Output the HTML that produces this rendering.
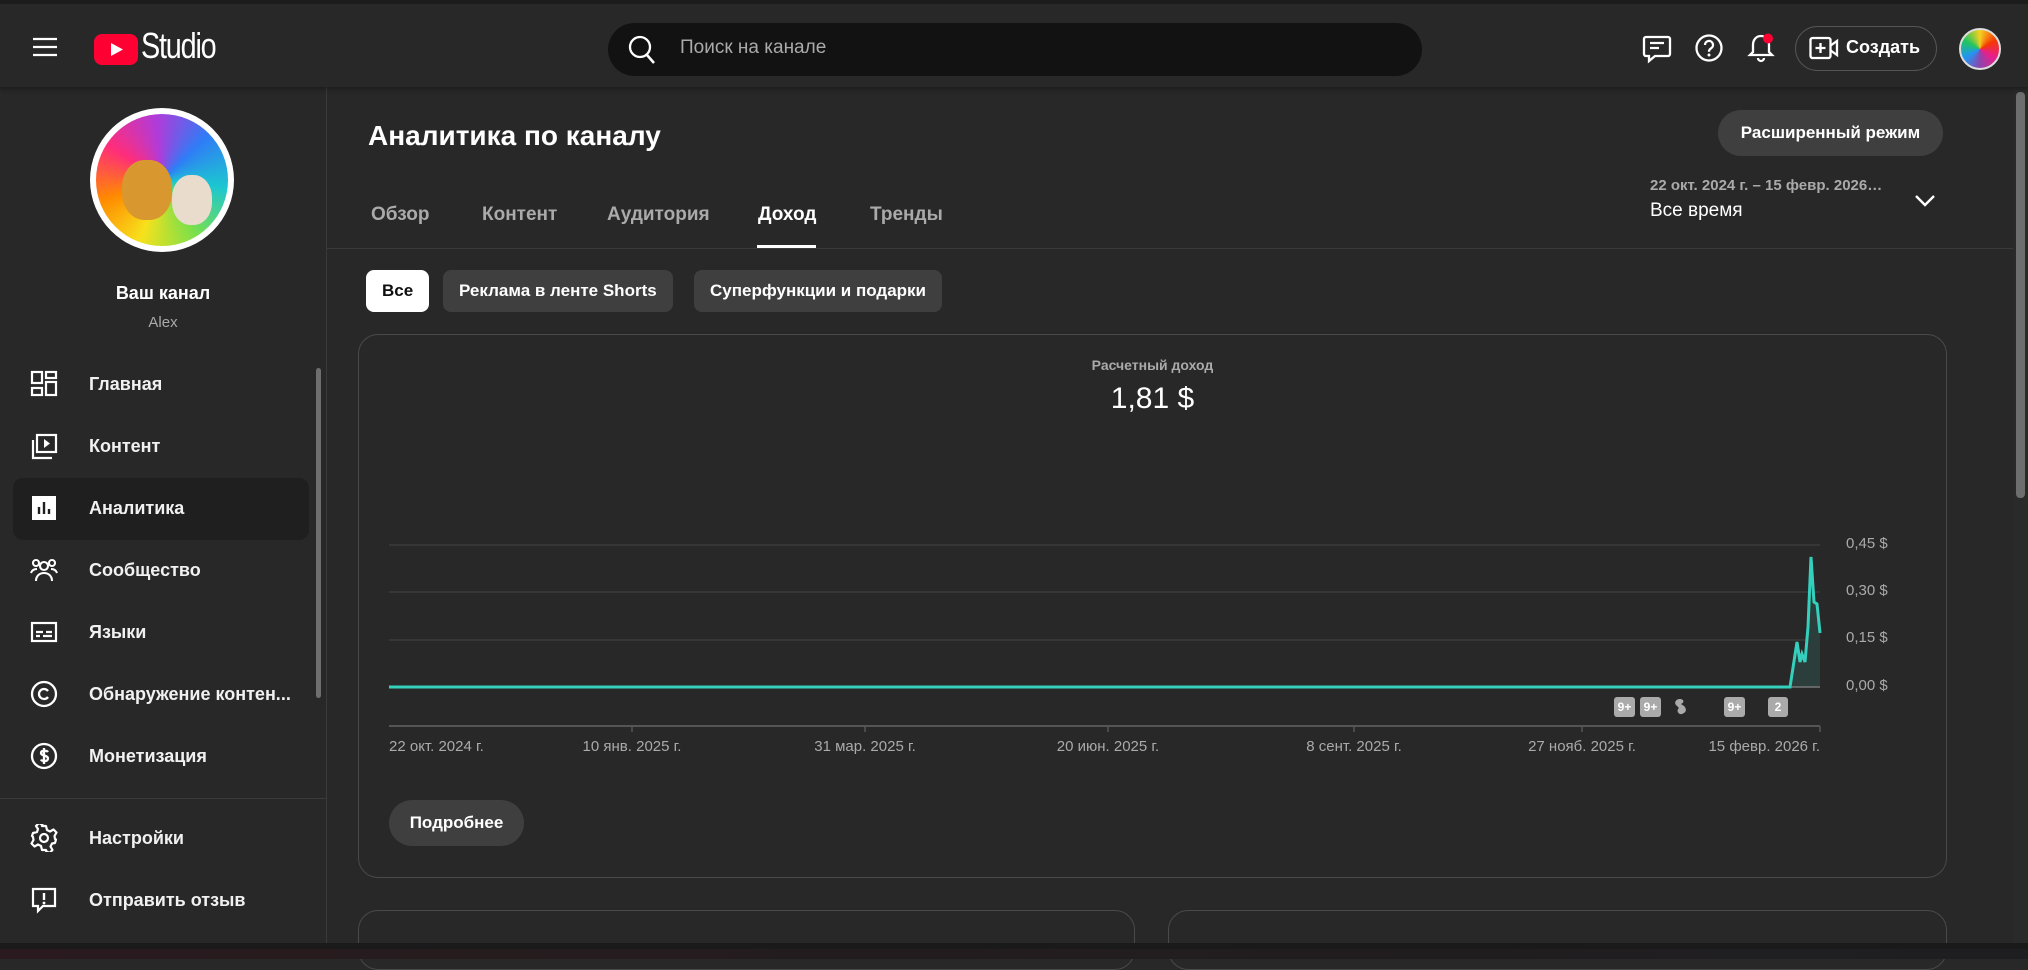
<!DOCTYPE html>
<html><head><meta charset="utf-8"><style>
*{box-sizing:border-box;margin:0;padding:0}
body{width:2028px;height:959px;overflow:hidden;background:#282828;font-family:"Liberation Sans","Noto Sans CJK SC",sans-serif;color:#fff;position:relative}
.a{position:absolute}
.top{left:0;top:0;width:2028px;height:87px;background:#282828;border-top:4px solid #1c1c1c;box-shadow:0 2px 5px rgba(0,0,0,.35);z-index:2}
.nav{left:30px;font-size:18px;font-weight:bold;color:#f1f1f1;width:270px;height:62px;display:flex;align-items:center;white-space:nowrap}
.nav svg{position:absolute;left:0;width:28px;height:28px}
.nav span{position:absolute;left:59px;white-space:nowrap}
.tab{top:204px;font-size:19px;color:#aaa;font-weight:bold}
.chip{top:270px;height:42px;border-radius:8px;background:#3f3f3f;font-size:17px;font-weight:bold;display:flex;align-items:center;padding:0 16px}
.xl{top:738px;font-size:15px;color:#aaa;white-space:nowrap}
.yl{left:1846px;font-size:15px;color:#aaa}
.bd{top:697px;height:20px;background:#aaa;border-radius:3px;color:#fff;font-size:12px;font-weight:bold;display:flex;align-items:center;justify-content:center}
</style></head><body>
<div class="a top">
  <svg class="a" style="left:32px;top:33px" width="26" height="20" viewBox="0 0 26 20"><path d="M1 2h24M1 10h24M1 18h24" stroke="#fff" stroke-width="2.2"/></svg>
  <svg class="a" style="left:94px;top:30px" width="44" height="31" viewBox="0 0 44 31"><rect width="44" height="31" rx="8" fill="#ff0033"/><path d="M17 9l12 6.5L17 22z" fill="#fff"/></svg>
  <div class="a" style="left:141px;top:21px;font-size:36px;letter-spacing:-1.5px;transform:scaleX(.8);transform-origin:left;font-weight:500">Studio</div>
  <div class="a" style="left:608px;top:19px;width:814px;height:53px;border-radius:27px;background:#121212"></div>
  <svg class="a" style="left:627px;top:30px" width="30" height="32" viewBox="0 0 30 32"><circle cx="13" cy="13" r="10" stroke="#fff" stroke-width="2.3" fill="none"/><path d="M20 21l7 8" stroke="#fff" stroke-width="2.5"/></svg>
  <div class="a" style="left:680px;top:33px;font-size:19px;color:#aaa">Поиск на канале</div>
  <svg class="a" style="left:1641px;top:29px" width="32" height="32" viewBox="0 0 32 32"><path d="M5 4h22a2 2 0 0 1 2 2v15a2 2 0 0 1-2 2H14l-6 5v-5H5a2 2 0 0 1-2-2V6a2 2 0 0 1 2-2z" fill="none" stroke="#fff" stroke-width="2.3"/><path d="M9 10h14M9 15h9" stroke="#fff" stroke-width="2.3"/></svg>
  <svg class="a" style="left:1694px;top:29px" width="30" height="30" viewBox="0 0 30 30"><circle cx="15" cy="15" r="12.5" fill="none" stroke="#fff" stroke-width="2.3"/><path d="M11 12a4 4 0 1 1 6 3.4c-1.5.9-2 1.6-2 3.3" fill="none" stroke="#fff" stroke-width="2.3"/><circle cx="15" cy="22" r="1.5" fill="#fff"/></svg>
  <svg class="a" style="left:1745px;top:27px" width="34" height="34" viewBox="0 0 34 34"><path d="M16 5c-5 0-8 4-8 9v7l-3 3h22l-3-3v-7c0-5-3-9-8-9zM13 27a3 3 0 0 0 6 0" fill="none" stroke="#fff" stroke-width="2.3"/><circle cx="23" cy="7.5" r="5" fill="#ff0033"/></svg>
  <div class="a" style="left:1795px;top:22px;width:142px;height:45px;border:1px solid #555;border-radius:23px"></div>
  <svg class="a" style="left:1809px;top:31px" width="30" height="26" viewBox="0 0 30 26"><rect x="1.5" y="3" width="20" height="20" rx="2" fill="none" stroke="#fff" stroke-width="2.3"/><path d="M21 11l7-5v14l-7-5M11.5 8v10M6.5 13h10" fill="none" stroke="#fff" stroke-width="2.3"/></svg>
  <div class="a" style="left:1846px;top:33px;font-size:18px;font-weight:bold">Создать</div>
  <div class="a" style="left:1959px;top:24px;width:42px;height:42px;border-radius:50%;border:2px solid #ddd;background:conic-gradient(#f5d020,#f53803,#e91e8c,#8e44ad,#2196f3,#22c55e,#f5d020)"></div>
</div>
<div class="a" style="left:326px;top:87px;width:1px;height:860px;background:#3a3a3a"></div>
<div class="a" style="left:90px;top:108px;width:144px;height:144px;border-radius:50%;background:#fff"></div>
<div class="a" style="left:96px;top:114px;width:132px;height:132px;border-radius:50%;background:conic-gradient(from 200deg,#f7e11b,#ff8a00,#ff2d7a,#b13bd9,#2f7cf6,#1cc7d0,#7be04a,#f7e11b)"></div>
<div class="a" style="left:122px;top:160px;width:50px;height:60px;border-radius:45%;background:#d9982f"></div>
<div class="a" style="left:172px;top:175px;width:40px;height:50px;border-radius:45%;background:#e9dccd"></div>
<div class="a" style="left:0;top:283px;width:326px;text-align:center;font-size:18px;font-weight:bold">Ваш канал</div>
<div class="a" style="left:0;top:314px;width:326px;text-align:center;font-size:15px;color:#aaa">Alex</div>
<div class="a" style="left:316px;top:368px;width:5px;height:330px;background:#6e6e6e;border-radius:3px"></div>
<div class="a" style="left:13px;top:478px;width:296px;height:62px;border-radius:10px;background:#1f1f1f"></div>
<div class="a nav" style="top:353px"><svg viewBox="0 0 28 28"><g fill="none" stroke="#fff" stroke-width="2.2"><rect x="2" y="2" width="10" height="11"/><rect x="16" y="2" width="10" height="6"/><rect x="2" y="18" width="10" height="7"/><rect x="16" y="12" width="10" height="13"/></g></svg><span>Главная</span></div>
<div class="a nav" style="top:415px"><svg viewBox="0 0 28 28"><g fill="none" stroke="#fff" stroke-width="2.2"><rect x="7" y="3" width="19" height="17"/><path d="M3 8v18h19"/></g><path d="M14 7l6 4.5-6 4.5z" fill="#fff"/></svg><span>Контент</span></div>
<div class="a nav" style="top:477px"><svg viewBox="0 0 28 28"><rect x="2" y="2" width="24" height="24" fill="#fff"/><path d="M9 20v-7M14 20V8M19 20v-5" stroke="#1f1f1f" stroke-width="2.4"/></svg><span>Аналитика</span></div>
<div class="a nav" style="top:539px"><svg viewBox="0 0 28 28"><g fill="none" stroke="#fff" stroke-width="2.1"><circle cx="14" cy="10" r="4"/><circle cx="6" cy="7" r="3"/><circle cx="22" cy="7" r="3"/><path d="M6 25c0-5 3.5-8 8-8s8 3 8 8M1 17c1-3 3-4 6-4M27 17c-1-3-3-4-6-4"/></g></svg><span>Сообщество</span></div>
<div class="a nav" style="top:601px"><svg viewBox="0 0 28 28"><g fill="none" stroke="#fff" stroke-width="2.2"><rect x="2" y="5" width="24" height="18"/><path d="M6 14h7M16 14h6M6 18h4M13 18h9"/></g></svg><span>Языки</span></div>
<div class="a nav" style="top:663px"><svg viewBox="0 0 28 28"><g fill="none" stroke="#fff" stroke-width="2.3"><circle cx="14" cy="14" r="12"/><path d="M18 11a5 5 0 1 0 0 6"/></g></svg><span>Обнаружение контен...</span></div>
<div class="a nav" style="top:725px"><svg viewBox="0 0 28 28"><g fill="none" stroke="#fff" stroke-width="2.3"><circle cx="14" cy="14" r="12"/><path d="M18 10c-1-1.5-7-2-7 1s7 2 7 5.5-6 3-7 1M14 6v16"/></g></svg><span>Монетизация</span></div>
<div class="a" style="left:0;top:798px;width:326px;height:1px;background:#3a3a3a"></div>
<div class="a nav" style="top:807px"><svg viewBox="0 0 28 28"><g fill="none" stroke="#fff" stroke-width="2.2"><circle cx="14" cy="14" r="4"/><path d="M12 2h4l1 4 3 1.5 3.5-2 3 3-2 3.5L25 15l1 .5v0l-1 3.5-3 .5-1.5 3 2 3.5-3 3-3.5-2L16 26h-4l-1-4-3-1.5-3.5 2-3-3 2-3.5L3 13l-1-1v0l1-3 4-1 1-3-2-3 3-3 3.5 2z" stroke-linejoin="round"/></g></svg><span>Настройки</span></div>
<div class="a nav" style="top:869px"><svg viewBox="0 0 28 28"><g fill="none" stroke="#fff" stroke-width="2.2"><path d="M3 3h22v17H13l-5 5v-5H3z"/></g><path d="M14 7v7" stroke="#fff" stroke-width="2.4"/><circle cx="14" cy="17" r="1.4" fill="#fff"/></svg><span>Отправить отзыв</span></div>
<div class="a" style="left:368px;top:120px;font-size:28px;font-weight:bold">Аналитика по каналу</div>
<div class="a" style="left:1718px;top:110px;width:225px;height:46px;border-radius:23px;background:#3f3f3f;font-size:17px;font-weight:bold;display:flex;align-items:center;justify-content:center">Расширенный режим</div>
<div class="a" style="left:1650px;top:177px;font-size:15px;color:#aaa;font-weight:bold">22 окт. 2024 г. – 15 февр. 2026…</div>
<div class="a" style="left:1650px;top:200px;font-size:19px;font-weight:500">Все время</div>
<svg class="a" style="left:1914px;top:194px" width="22" height="14" viewBox="0 0 22 14"><path d="M2 2l9 9 9-9" fill="none" stroke="#fff" stroke-width="2.4"/></svg>
<div class="a tab" style="left:371px">Обзор</div>
<div class="a tab" style="left:482px">Контент</div>
<div class="a tab" style="left:607px">Аудитория</div>
<div class="a tab" style="left:758px;color:#fff">Доход</div>
<div class="a" style="left:757px;top:245px;width:59px;height:3px;background:#fff"></div>
<div class="a tab" style="left:870px">Тренды</div>
<div class="a" style="left:327px;top:248px;width:1690px;height:1px;background:#3a3a3a"></div>
<div class="a chip" style="left:366px;background:#fff;color:#0f0f0f">Все</div>
<div class="a chip" style="left:443px">Реклама в ленте Shorts</div>
<div class="a chip" style="left:694px">Суперфункции и подарки</div>
<div class="a" style="left:358px;top:334px;width:1589px;height:544px;border:1px solid #4a4a4a;border-radius:20px"></div>
<div class="a" style="left:358px;top:357px;width:1589px;text-align:center;font-size:14px;color:#aaa;font-weight:bold">Расчетный доход</div>
<div class="a" style="left:358px;top:382px;width:1589px;text-align:center;font-size:30px">1,81 $</div>
<svg class="a" style="left:0;top:0" width="2028" height="959">
<g stroke="#3a3a3a" stroke-width="1.5"><path d="M389 545H1820M389 592H1820M389 640H1820"/></g>
<path d="M1790 687L1797 642 1800 662 1802 654 1805 662 1808 627 1811 557 1814 602 1817 604 1820 633V687Z" fill="#2b3e3c"/>
<path d="M1790 687H1820" stroke="#777" stroke-width="1.5"/>
<path d="M389 687H1790L1797 642 1800 662 1802 654 1805 662 1808 627 1811 557 1814 602 1817 604 1820 633" fill="none" stroke="#35d0bd" stroke-width="3"/>
<path d="M389 726H1820" stroke="#555" stroke-width="2"/>
<g stroke="#555" stroke-width="1.5"><path d="M632 726v6M865 726v6M1108 726v6M1354 726v6M1582 726v6M1820 726v6"/></g>
<path d="M1683 700c-4-3-10 1-7 5l3 3c-3 2-1 7 3 6l2-1c3-2 2-5 0-7l-3-2c2-1 3-2 2-4z" fill="#aaa"/>
</svg>
<div class="a bd" style="left:1614px;width:21px">9+</div>
<div class="a bd" style="left:1640px;width:21px">9+</div>
<div class="a bd" style="left:1724px;width:21px">9+</div>
<div class="a bd" style="left:1768px;width:20px">2</div>
<div class="a yl" style="top:535px">0,45 $</div>
<div class="a yl" style="top:582px">0,30 $</div>
<div class="a yl" style="top:629px">0,15 $</div>
<div class="a yl" style="top:677px">0,00 $</div>
<div class="a xl" style="left:389px">22 окт. 2024 г.</div>
<div class="a xl" style="left:632px;transform:translateX(-50%)">10 янв. 2025 г.</div>
<div class="a xl" style="left:865px;transform:translateX(-50%)">31 мар. 2025 г.</div>
<div class="a xl" style="left:1108px;transform:translateX(-50%)">20 июн. 2025 г.</div>
<div class="a xl" style="left:1354px;transform:translateX(-50%)">8 сент. 2025 г.</div>
<div class="a xl" style="left:1582px;transform:translateX(-50%)">27 нояб. 2025 г.</div>
<div class="a xl" style="left:1820px;transform:translateX(-100%)">15 февр. 2026 г.</div>
<div class="a" style="left:389px;top:800px;width:135px;height:46px;border-radius:23px;background:#3f3f3f;font-size:17px;font-weight:bold;display:flex;align-items:center;justify-content:center">Подробнее</div>
<div class="a" style="left:358px;top:910px;width:777px;height:60px;border:1px solid #4a4a4a;border-radius:20px"></div>
<div class="a" style="left:1168px;top:910px;width:779px;height:60px;border:1px solid #4a4a4a;border-radius:20px"></div>
<div class="a" style="left:2013px;top:88px;width:15px;height:860px;background:#2a2a2a"></div>
<div class="a" style="left:2016px;top:92px;width:9px;height:406px;background:#6e6e6e;border-radius:4px"></div>
<div class="a" style="left:0;top:943px;width:2028px;height:6px;background:#1a1a1a"></div>
<div class="a" style="left:0;top:949px;width:2028px;height:10px;background:linear-gradient(90deg,#2a1a1f,#241c1e 30%,#1e1e20)"></div>
</body></html>
